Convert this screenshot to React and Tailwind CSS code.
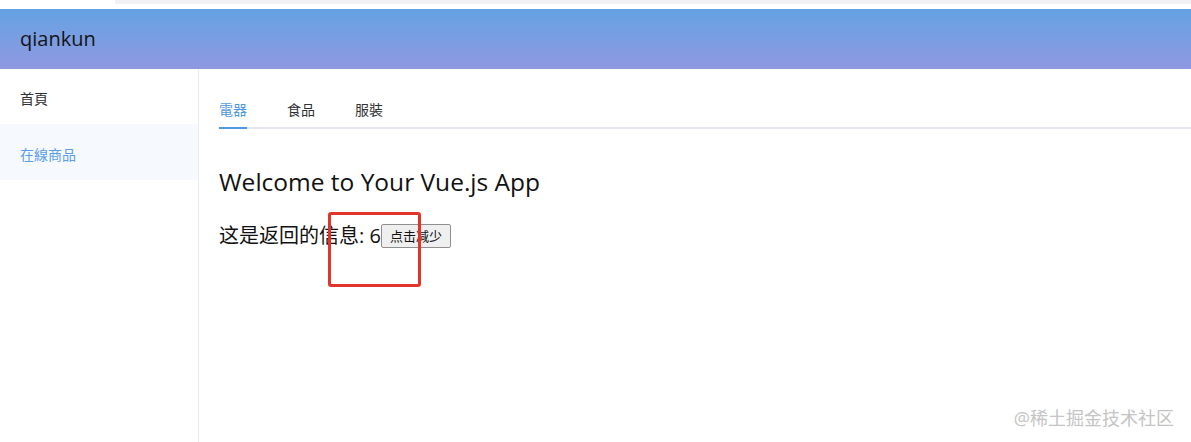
import React, { useState } from "react";

const FONT = { fontFamily: '"Open Sans", "Noto Sans CJK SC", sans-serif' };

export default function App() {
  const [count, setCount] = useState(6);
  const [tab, setTab] = useState(0);
  const tabs = ["電器", "食品", "服裝"];
  return (
    <div className="relative w-[1191px] h-[442px] overflow-hidden bg-white text-[#222]" style={FONT}>
      <div className="h-[4px] ml-[115px] bg-[#f1f1f3]" />
      <div className="h-[5px] bg-white" />
      <header className="h-[60px] flex items-center px-[20px] bg-gradient-to-b from-[#63a2e3] to-[#8e98e1]">
        <span className="text-[20px] text-[#141414]">qiankun</span>
      </header>
      <div className="flex h-[373px]">
        <aside className="w-[199px] shrink-0 border-r border-[#ececec] flex flex-col">
          <div className="h-[55px] flex items-center pl-[20px] pt-[3px] text-[14px] text-[#303133]">首頁</div>
          <div className="h-[56px] flex items-center pl-[20px] pt-[4px] text-[14px] text-[#5b9ee6] bg-[#f6f9fe]">在線商品</div>
        </aside>
        <main className="flex-1 pl-[20px] pt-[24px]">
          <div className="flex gap-[40px] border-b-2 border-[#e4e7ed] h-[36px]">
            {tabs.map((t, i) => (
              <button
                key={t}
                onClick={() => setTab(i)}
                className={`relative h-[34px] text-[14px] leading-[30px] ${
                  tab === i ? "text-[#4f98e4]" : "text-[#303133]"
                }`}
              >
                {t}
                {tab === i && (
                  <span className="absolute left-0 right-0 -bottom-[2px] h-[2px] bg-[#4f98e4]" />
                )}
              </button>
            ))}
          </div>
          <h1 className="mt-[37px] text-[24.5px] leading-[32px] text-[#111]" style={{ fontFamily: '"Open Sans", sans-serif' }}>
            Welcome to Your Vue.js App
          </h1>
          <div className="mt-[25px] flex items-center text-[20px] leading-[26px] text-[#111]">
            <span>这是返回的信息: {count}</span>
            <button
              onClick={() => setCount(count - 1)}
              className="h-[24px] px-[8px] text-[13px] leading-[20px] bg-[#efefef] border border-[#8f8f8f] rounded-[2px] text-[#111]"
            >
              点击减少
            </button>
          </div>
        </main>
      </div>
      <div className="absolute left-[328px] top-[212px] w-[93px] h-[75px] border-[3px] border-[#e3342b] rounded-[3px]" />
      <div className="absolute right-[17px] top-[407px] text-[18px] leading-[22px] text-[#c4c4c4]">@稀土掘金技术社区</div>
    </div>
  );
}
